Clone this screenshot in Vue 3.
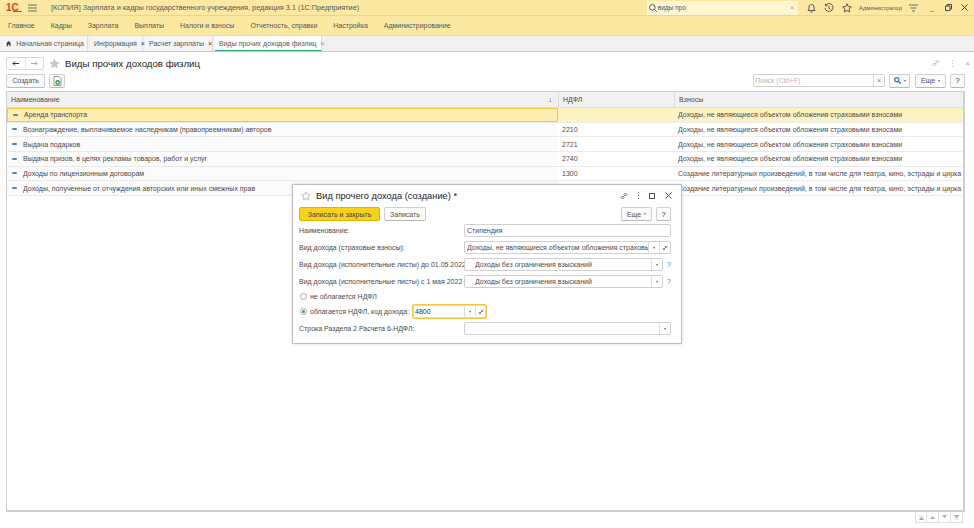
<script setup>
const menu = ['Главное', 'Кадры', 'Зарплата', 'Выплаты', 'Налоги и взносы', 'Отчетность, справки', 'Настройка', 'Администрирование'];

const noIns = 'Доходы, не являющиеся объектом обложения страховыми взносами';
const lit = 'Создание литературных произведений, в том числе для театра, кино, эстрады и цирка';
const rows = [
  { name: 'Аренда транспорта', code: '', ins: noIns, active: true },
  { name: 'Вознаграждение, выплачиваемое наследникам (правопреемникам) авторов', code: '2210', ins: noIns },
  { name: 'Выдача подарков', code: '2721', ins: noIns },
  { name: 'Выдача призов, в целях рекламы товаров, работ и услуг', code: '2740', ins: noIns },
  { name: 'Доходы по лицензионным договорам', code: '1300', ins: lit },
  { name: 'Доходы, полученные от отчуждения авторских или иных смежных прав', code: '', ins: lit }
];
</script>

<template>
  <div class="app">
    <div class="titlebar">
      <span class="logo">1С<i></i></span>
      <svg class="burger" width="9" height="8" viewBox="0 0 9 8"><path d="M0 1h9M0 4h9M0 7h9" stroke="#6b6b5a" fill="none" /></svg>
      <span class="apptitle">[КОПИЯ] Зарплата и кадры государственного учреждения, редакция 3.1 (1С:Предприятие)</span>
      <div class="globalsearch">
        <svg width="8" height="8" viewBox="0 0 8 8"><circle cx="3.4" cy="3.4" r="2.8" stroke="#555" fill="none" /><path d="M5.5 5.5L7.8 7.8" stroke="#555" /></svg>
        <span>виды про</span>
        <b>×</b>
      </div>
      <svg class="ti" width="9" height="10" viewBox="0 0 9 10"><path d="M1 7.5c1-1 1-2 1-3.500C2 2.500 3 1.500 4.500 1.500S7 2.500 7 4c0 1.500 0 2.500 1 3.500zM3.500 9h2" stroke="#555" fill="none" /></svg>
      <svg class="ti" width="10" height="10" viewBox="0 0 10 10"><path d="M1.500 2.500A4 4 0 1 1 1 5M1.500 .8v2h2M5 2.800V5.300l1.600 1" stroke="#555" fill="none" /></svg>
      <svg class="ti" width="10" height="10" viewBox="0 0 10 10"><path d="M5 .8l1.300 2.800 3 .4-2.200 2 .6 3L5 7.500 2.300 9l.6-3L.7 4l3-.4z" stroke="#555" fill="none" /></svg>
      <span class="user">Администратор</span>
      <svg class="ti2" width="9" height="8" viewBox="0 0 9 8"><path d="M0 1h9M1.500 4h6M3 7h3" stroke="#666" fill="none" /></svg>
      <span class="winbtn">_</span>
      <svg class="winico" width="7" height="7" viewBox="0 0 7 7"><path d="M2 2V.5h4.500V5H5M.5 2h4.500v4.500H.5z" stroke="#444" fill="none" /></svg>
      <svg class="winico" width="7" height="7" viewBox="0 0 7 7"><path d="M.5.500l6 6M6.500.500l-6 6" stroke="#444" fill="none" /></svg>
    </div>

    <div class="menubar">
      <span v-for="m in menu" :key="m">{{ m }}</span>
    </div>

    <div class="tabs">
      <div class="tab home">
        <svg width="7" height="7" viewBox="0 0 7 7"><path d="M3.500.3L7 3.500H6V7H4.300V4.800H2.700V7H1V3.500H0z" fill="#444" /></svg>
        Начальная страница
      </div>
      <div class="tab info">Информация <b>×</b></div>
      <div class="tab calc">Расчет зарплаты <b>×</b></div>
      <div class="tab current">Виды прочих доходов физлиц <b>×</b></div>
    </div>

    <main class="page">
      <div class="pagehead">
        <div class="navbtns">
          <span><svg width="7" height="5" viewBox="0 0 7 5"><path d="M7 2.500H1M3 .5l-2 2 2 2" stroke="#333" fill="none" /></svg></span>
          <span><svg width="7" height="5" viewBox="0 0 7 5"><path d="M0 2.500h6M4 .5l2 2-2 2" stroke="#aaa" fill="none" /></svg></span>
        </div>
        <svg class="bigstar" width="11" height="11" viewBox="0 0 11 11"><path d="M5.500.3l1.600 3.500 3.700.4-2.800 2.500.8 3.700-3.300-1.900-3.300 1.900.8-3.700L.2 4.200l3.700-.4z" fill="#c9c9c9" /></svg>
        <h1>Виды прочих доходов физлиц</h1>
        <div class="headtools">
          <svg width="8" height="8" viewBox="0 0 8 8"><path d="M3 5l2-2M1 5.500l1.500-1.500 1.500 1.500L2.500 7zM4 2.500L5.500 1 7 2.500 5.500 4z" stroke="#bbb" fill="none" /></svg>
          <span class="dots"></span>
          <b>×</b>
        </div>
      </div>

      <div class="toolbar">
        <button class="btn create">Создать</button>
        <button class="btn iconbtn">
          <svg width="9" height="10" viewBox="0 0 9 10"><path d="M1 .5h5l2 2V9.500H1z" fill="#fff" stroke="#999" /><circle cx="4.700" cy="6.500" r="2.400" fill="#2f9e44" /><circle cx="4.700" cy="6.500" r="1" fill="#fff" /></svg>
        </button>
        <div class="searchbox">
          <span class="ph">Поиск (Ctrl+F)</span>
          <b>×</b>
        </div>
        <button class="btn findbtn">
          <svg width="7" height="7" viewBox="0 0 7 7"><circle cx="2.800" cy="2.800" r="2.100" stroke="#2b78b8" stroke-width="1.300" fill="none" /><path d="M4.500 4.500L6.800 6.800" stroke="#2b78b8" stroke-width="1.300" /></svg>
          <i class="caret"></i>
        </button>
        <button class="btn more">Еще <i class="caret"></i></button>
        <button class="btn help">?</button>
      </div>

      <div class="grid">
        <div class="row head">
          <div class="c name">Наименование <span class="sort">↓</span></div>
          <div class="c code">НДФЛ</div>
          <div class="c ins">Взносы</div>
        </div>
        <div v-for="r in rows" :key="r.name" class="row" :class="{ active: r.active }">
          <div class="c name"><i class="dash"></i>{{ r.name }}</div>
          <div class="c code">{{ r.code }}</div>
          <div class="c ins">{{ r.ins }}</div>
        </div>
      </div>

      <div class="pager">
        <span><svg width="5" height="5" viewBox="0 0 5 5"><path d="M0 1h5M0 5l2.500-3L5 5z" fill="#aaa" stroke="#aaa" stroke-width=".5" /></svg></span>
        <span><svg width="5" height="4" viewBox="0 0 5 4"><path d="M0 4l2.500-3L5 4z" fill="#aaa" /></svg></span>
        <span><svg width="5" height="4" viewBox="0 0 5 4"><path d="M0 0l2.500 3L5 0z" fill="#aaa" /></svg></span>
        <span><svg width="5" height="5" viewBox="0 0 5 5"><path d="M0 4h5M0 0l2.500 3L5 0z" fill="#aaa" stroke="#aaa" stroke-width=".5" /></svg></span>
      </div>
    </main>

    <div class="dialog">
      <div class="dlghead">
        <svg width="10" height="10" viewBox="0 0 10 10"><path d="M5 .8l1.300 2.800 3 .4-2.200 2 .6 3L5 7.500 2.300 9l.6-3L.7 4l3-.4z" stroke="#bdbdbd" fill="none" /></svg>
        <h2>Вид прочего дохода (создание) *</h2>
        <div class="dlgtools">
          <svg width="8" height="8" viewBox="0 0 8 8"><path d="M3 5l2-2M1 5.500l1.500-1.500 1.500 1.500L2.500 7zM4 2.500L5.500 1 7 2.500 5.500 4z" stroke="#777" fill="none" /></svg>
          <span class="dots dark"></span>
          <svg width="6" height="6" viewBox="0 0 6 6"><rect x=".5" y=".5" width="5" height="5" stroke="#555" fill="none" /></svg>
          <svg width="7" height="7" viewBox="0 0 7 7"><path d="M.5.500l6 6M6.500.500l-6 6" stroke="#555" fill="none" /></svg>
        </div>
      </div>
      <div class="dlgbar">
        <button class="btn save">Записать и закрыть</button>
        <button class="btn write">Записать</button>
        <button class="btn more dlgmore">Еще <i class="caret"></i></button>
        <button class="btn help">?</button>
      </div>

      <div class="frow f1">
        <label>Наименование:</label>
        <div class="field grow">Стипендия</div>
      </div>
      <div class="frow f2">
        <label>Вид дохода (страховые взносы):</label>
        <div class="field grow">
          <span class="val">Доходы, не являющиеся объектом обложения страховыми</span>
          <i class="side"><i class="caret"></i></i>
          <i class="side"><svg width="6" height="6" viewBox="0 0 8 8"><path d="M3 5l2-2M1 5.500l1.500-1.500 1.500 1.500L2.500 7zM4 2.500L5.500 1 7 2.500 5.500 4z" stroke="#666" fill="none" /></svg></i>
        </div>
      </div>
      <div class="frow f3">
        <label>Вид дохода (исполнительные листы) до 01.05.2022:</label>
        <div class="field grow">
          <span class="val ind">Доходы без ограничения взысканий</span>
          <i class="side"><i class="caret"></i></i>
        </div>
        <span class="q">?</span>
      </div>
      <div class="frow f4">
        <label>Вид дохода (исполнительные листы) с 1 мая 2022 г.:</label>
        <div class="field grow">
          <span class="val ind">Доходы без ограничения взысканий</span>
          <i class="side"><i class="caret"></i></i>
        </div>
        <span class="q">?</span>
      </div>
      <div class="frow f5">
        <i class="radio"></i>
        <span class="rlabel">не облагается НДФЛ</span>
      </div>
      <div class="frow f6">
        <i class="radio on"></i>
        <span class="rlabel">облагается НДФЛ, код дохода:</span>
        <div class="field focus">
          <span class="val">4800</span>
          <i class="side"><i class="caret"></i></i>
          <i class="side"><svg width="6" height="6" viewBox="0 0 8 8"><path d="M3 5l2-2M1 5.500l1.500-1.500 1.500 1.500L2.500 7zM4 2.500L5.500 1 7 2.500 5.500 4z" stroke="#666" fill="none" /></svg></i>
        </div>
      </div>
      <div class="frow f7">
        <label>Строка Раздела 2 Расчета 6-НДФЛ:</label>
        <div class="field grow">
          <span class="val"></span>
          <i class="side"><i class="caret"></i></i>
        </div>
      </div>
    </div>
  </div>
</template>

<style scoped>
.app {
  position: relative;
  width: 974px;
  height: 528px;
  overflow: hidden;
  background: #fff;
  font-family: "Liberation Sans", Arial, sans-serif;
  font-size: 7px;
  color: #4a4a4a;
}

.titlebar {
  display: flex;
  align-items: center;
  height: 15px;
  background: #fbe9a2;
  border-bottom: 1px solid #e9d68a;
}
.logo {
  position: relative;
  width: 16px;
  margin-left: 6px;
  font-size: 10px;
  font-weight: 700;
  line-height: 10px;
  color: #d9412b;
}
.logo i {
  position: absolute;
  left: 7px;
  bottom: 1px;
  width: 9px;
  height: 1px;
  background: #d9412b;
}
.burger { margin-left: 6px; }
.apptitle {
  margin-left: 14px;
  font-size: 7.3px;
  color: #555;
}
.globalsearch {
  display: flex;
  align-items: center;
  gap: 1px;
  width: 151px;
  height: 14px;
  margin-left: auto;
  padding: 0 4px 0 2px;
  box-sizing: border-box;
  background: #fdf6d3;
  color: #555;
  font-size: 6.5px;
}
.globalsearch b {
  margin-left: auto;
  font-weight: 400;
  color: #999;
}
.ti { margin-left: 8px; }
.globalsearch + .ti { margin-left: 9px; }
.user {
  margin-left: 7px;
  font-size: 6px;
  color: #555;
}
.ti2 { margin-left: 7px; }
.winbtn {
  margin-left: 12px;
  width: 6px;
  color: #555;
  line-height: 7px;
}
.winico { margin-left: 9px; }
.winico:last-child { margin-right: 6px; }

.menubar {
  display: flex;
  align-items: center;
  gap: 16px;
  height: 19px;
  padding-left: 8px;
  background: #fbe9a2;
  border-bottom: 1px solid #e6dcae;
  font-size: 7px;
  color: #555;
}

.tabs {
  display: flex;
  height: 16px;
  gap: 2px;
  background: #f0f0f0;
  border-bottom: 1px solid #c9c9c9;
  box-sizing: border-box;
  padding-bottom: 0;
}
.tab {
  display: flex;
  align-items: center;
  height: 15px;
  background: #f5f5f5;
  border-right: 1px solid #dcdcdc;
  box-sizing: border-box;
  padding: 0 3px 0 4px;
  color: #555;
  white-space: nowrap;
}
.tab b {
  margin-left: 4px;
  font-weight: 400;
  color: #333;
  font-size: 7px;
}
.tab.home {
  gap: 5px;
  width: 88px;
  padding-left: 6px;
}
.tab.info { width: 53px; }
.tab.calc { width: 68px; }
.tab.current {
  width: 107px;
  background: #fff;
  border-bottom: 1px solid #2aa866;
  margin-bottom: 0;
}
.tab.current b { color: #999; }

.page {
  height: 477px;
  padding: 4px 9px 0 6px;
  box-sizing: border-box;
}
.pagehead {
  display: flex;
  align-items: center;
  height: 14px;
}
.navbtns {
  display: flex;
  width: 38px;
  height: 13px;
  border: 1px solid #d8d8d8;
  border-radius: 2px;
  box-sizing: border-box;
}
.navbtns span {
  flex: 1;
  display: flex;
  align-items: center;
  justify-content: center;
}
.navbtns span + span { border-left: 1px solid #e4e4e4; }
.bigstar { margin-left: 5px; }
h1 {
  margin: 0 0 0 5px;
  font-size: 9.700px;
  font-weight: 400;
  color: #222;
}
.headtools {
  display: flex;
  align-items: center;
  gap: 12px;
  margin-left: auto;
  margin-right: -5px;
  color: #aaa;
}
.headtools b { font-weight: 400; font-size: 8px; }
.dots {
  width: 1px;
  height: 7px;
  background: repeating-linear-gradient(#bbb 0 1px, transparent 1px 3px);
}
.dots.dark { background: repeating-linear-gradient(#555 0 1px, transparent 1px 3px); }

.toolbar {
  display: flex;
  align-items: center;
  height: 15px;
  margin-top: 3px;
}
.btn {
  display: flex;
  align-items: center;
  justify-content: center;
  height: 14px;
  padding: 0;
  background: #fafafa;
  border: 1px solid #cfcfcf;
  border-bottom-color: #b8b8b8;
  border-radius: 2px;
  box-sizing: border-box;
  font-family: inherit;
  font-size: 7px;
  color: #555;
}
.create { width: 39px; }
.iconbtn { width: 16px; margin-left: 4px; }
.searchbox {
  display: flex;
  align-items: center;
  width: 132px;
  height: 13px;
  margin-left: auto;
  border: 1px solid #cfcfcf;
  border-radius: 2px;
  box-sizing: border-box;
  background: #fff;
}
.ph {
  flex: 1;
  padding-left: 1px;
  color: #b5b5b5;
}
.searchbox b {
  width: 10px;
  border-left: 1px solid #ddd;
  text-align: center;
  font-weight: 400;
  color: #777;
  line-height: 11px;
}
.findbtn { width: 21px; margin-left: 4px; gap: 3px; }
.more { width: 31px; margin-left: 5px; gap: 3px; }
.help { width: 15px; margin-left: 4px; font-size: 8px; color: #333; }
.caret {
  display: inline-block;
  width: 0;
  height: 0;
  border: 1.500px solid transparent;
  border-top: 2px solid #666;
  border-bottom: 0;
}

.grid {
  height: 421px;
  margin-top: 3px;
  border: 1px solid #cfcfcf;
  border-width: 1px 2px 2px 1px;
  box-sizing: border-box;
}
.row {
  display: grid;
  grid-template-columns: 551px 116px 1fr;
  height: 14.670px;
  border-bottom: 1px solid #eaeaea;
  box-sizing: border-box;
}
.row.head {
  height: 16px;
  background: #f0f0f0;
  border-bottom: 1px solid #dcdcdc;
}
.c {
  display: flex;
  align-items: center;
  padding-left: 4px;
  white-space: nowrap;
  overflow: hidden;
}
.name { background: #fbfbfb; }
.head .name { background: none; }
.head .code { border-left: 1px solid #ddd; }
.head .ins { border-left: 1px solid #ddd; }
.sort {
  margin-left: auto;
  margin-right: 6px;
  font-size: 7px;
  color: #333;
}
.dash {
  width: 5px;
  height: 2px;
  margin: 0 6px 0 1px;
  background: #4f86b5;
  border-radius: 1px;
}
.row.active { background: #fdf2c4; }
.row.active .name {
  background: #fdeeb0;
  border: 1px solid #f3c644;
}

.pager {
  display: flex;
  justify-content: flex-end;
  margin-right: 2px;
}
.pager span {
  display: flex;
  align-items: center;
  justify-content: center;
  width: 12px;
  height: 11px;
  border: 1px solid #e0e0e0;
  border-top: 0;
  box-sizing: border-box;
}
.pager span + span { border-left: 0; }

.dialog {
  position: absolute;
  left: 292px;
  top: 184px;
  width: 390px;
  height: 160px;
  padding: 0 10px 0 6px;
  box-sizing: border-box;
  background: #fff;
  border: 1px solid #bdbdbd;
  box-shadow: 0 0 3px rgba(0, 0, 0, 0.15);
}
.dlghead {
  display: flex;
  align-items: center;
  height: 21px;
  padding-left: 2px;
}
h2 {
  margin: 0 0 0 5px;
  font-size: 9.300px;
  font-weight: 400;
  color: #222;
}
.dlgtools {
  display: flex;
  align-items: center;
  gap: 10px;
  margin-left: auto;
  margin-right: -1px;
}
.dlgbar {
  display: flex;
  align-items: center;
  height: 14px;
  margin-top: 1px;
}
.save {
  width: 81px;
  background: #f7d21c;
  border-color: #dcb400;
  color: #444;
}
.write { width: 42px; margin-left: 4px; }
.dlgmore { margin-left: auto; }

.frow {
  display: flex;
  align-items: center;
  height: 13px;
}
.frow label { width: 165px; flex: none; white-space: nowrap; }
.f1 { margin-top: 3px; }
.f2 { margin-top: 4px; }
.f3 { margin-top: 4px; padding-right: 0; }
.f4 { margin-top: 4px; }
.f5 { margin-top: 2px; }
.f6 { margin-top: 2px; }
.f7 { margin-top: 4px; }

.field {
  display: flex;
  align-items: center;
  height: 13px;
  box-sizing: border-box;
  padding-left: 2px;
  background: #fff;
  border: 1px solid #cfcfcf;
  border-radius: 2px;
  white-space: nowrap;
  overflow: hidden;
}
.grow { flex: 1; }
.val { flex: 1; overflow: hidden; }
.ind { padding-left: 8px; }
.side {
  display: flex;
  align-items: center;
  justify-content: center;
  flex: none;
  width: 10px;
  height: 100%;
  border-left: 1px solid #ddd;
}
.q {
  width: 7px;
  margin-left: 1px;
  text-align: right;
  color: #2b86c5;
  font-size: 7.500px;
}
.radio {
  display: flex;
  align-items: center;
  justify-content: center;
  flex: none;
  width: 7px;
  height: 7px;
  margin-left: 1px;
  border: 1px solid #aaa;
  border-radius: 50%;
  box-sizing: border-box;
}
.radio.on::after {
  content: "";
  width: 3px;
  height: 3px;
  border-radius: 50%;
  background: #2aa866;
}
.rlabel { margin-left: 3px; white-space: nowrap; }
.field.focus {
  width: 75px;
  height: 15px;
  margin-left: 3px;
  border: 1px solid #f3c644;
  box-shadow: inset 0 0 0 1px #f7da7c;
  color: #333;
}
</style>
